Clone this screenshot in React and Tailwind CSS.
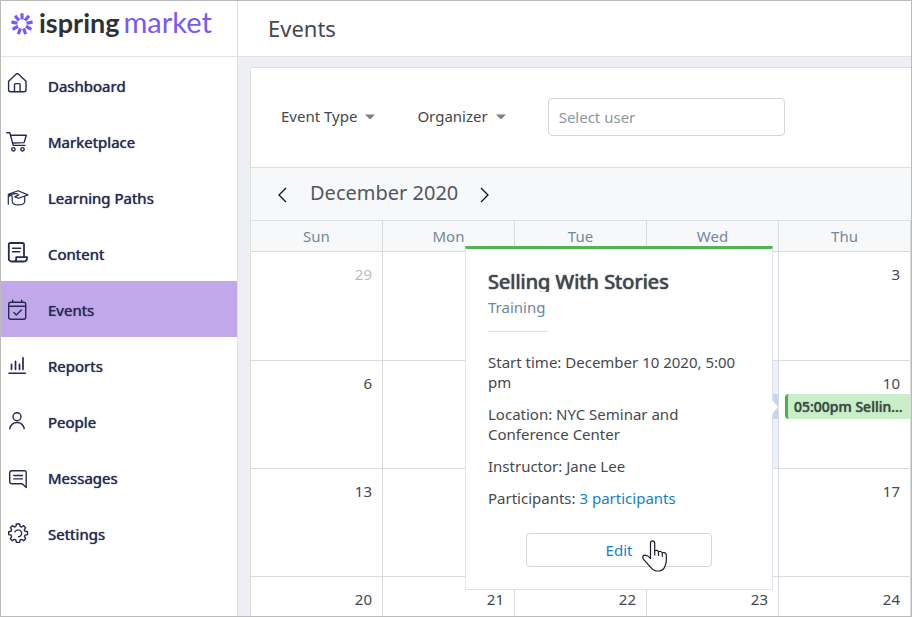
// --- Imports ---
import React from "react";
import { clsx } from "clsx";

// --- Icons ---
// Shared wrapper for the sidebar icons.
function NavIcon({ children }) {
  return (
    <svg
      className="h-6 w-6 shrink-0"
      viewBox="0 0 24 24"
      fill="none"
      stroke="currentColor"
      strokeWidth="1.4"
      strokeLinecap="round"
      strokeLinejoin="round"
      aria-hidden="true"
    >
      {children}
    </svg>
  );
}

const icons = {
  dashboard: (
    <>
      <path d="M3.6 8.2 11.3 1.1a1.5 1.5 0 0 1 2 0L21 8.2v8.6a2 2 0 0 1-2 2H5.6a2 2 0 0 1-2-2z" />
      <path d="M9.5 18.6v-7a1 1 0 0 1 1-1h3.6a1 1 0 0 1 1 1v7" />
    </>
  ),
  marketplace: (
    <>
      <path d="M1.8 3.8h3l3.4 12.6H20" />
      <path d="M5.6 6.2h15.7l-2.2 7.4-11.4.4" />
      <circle cx="8.4" cy="20.3" r="1.7" />
      <circle cx="17.5" cy="20.3" r="1.7" />
    </>
  ),
  learning: (
    <>
      <path
        d="M3.3 9.4 13 5.7l10 4.2-9.6 3.4-3.6-1.4 4-2M3.3 9.4v9.8M3.3 9.4l3.9 1.8M7.2 11.2v5.3c.3 4.5 12 4.5 12.5 0v-5"
        strokeWidth="1.2"
      />
      <path d="M4 11.5c2-3 5.5-3.2 8.5-2.7" strokeWidth="1.2" />
    </>
  ),
  content: (
    <>
      <path
        d="M19 16.2V3.3A1.3 1.3 0 0 0 17.7 2H5.2a1.4 1.4 0 0 0-1.4 1.4v14.3a2.8 2.8 0 0 0 2.8 2.8h12.2c2 0 3.3-1.7 3.3-4.3H11.2V18a2.5 2.5 0 0 1-2.5 2.5"
        strokeWidth="1.8"
      />
      <path d="M7.6 7.3h8M7.6 10.8h7" strokeWidth="1.6" />
    </>
  ),
  events: (
    <>
      <rect x="3.7" y="5.2" width="17" height="17" rx="2" />
      <path d="M3.7 9.3h17M7.7 3.3v1.9M16.7 3.3v1.9M8.8 15.6l2.5 2.5 5-5.2" />
    </>
  ),
  reports: (
    <>
      <path d="M4 20.2h16.3" strokeWidth="1.6" />
      <path d="M6.5 16.3v-5M10.5 16.3v-8M14.5 16.3v-5M18 16.3V4.8" strokeWidth="1.7" />
    </>
  ),
  people: (
    <>
      <circle cx="12" cy="7.7" r="4" />
      <path d="M4.8 19.7c1-4.4 3.8-6.2 7.2-6.2s6.2 1.8 7.2 6.2" />
    </>
  ),
  messages: (
    <>
      <path d="m21.2 22.5-4-3.7H7a2.3 2.3 0 0 1-2.3-2.3V8A2.3 2.3 0 0 1 7 5.7h12.5a1.7 1.7 0 0 1 1.7 1.7z" />
      <path d="M8.8 10.5h8.6M8.8 13.9h8.6" />
    </>
  ),
  settings: (
    <>
      <path d="M11.4 3h3.2l.5 2.4 1.5.6 2-1.3 2 2-1.2 2 .6 1.6 2.5.5v2.8l-2.5.5-.6 1.6 1.3 2-2 2-2.1-1.3-1.5.6-.5 2.4h-3.2l-.5-2.4-1.5-.6-2.1 1.3-2-2 1.3-2-.6-1.6-2.3-.5v-2.8l2.3-.5.6-1.6-1.3-2 2-2 2.1 1.3 1.5-.6z" />
      <path d="M10 10.800a3.500 3.500 0 1 1 3.600 5" />
    </>
  ),
};

function LogoMark() {
  return (
    <svg className="h-6 w-6 shrink-0" viewBox="0 0 24 24" aria-hidden="true">
      {[0, 40, 80, 120, 160, 200, 240, 280, 320].map((angle) => (
        <rect
          key={angle}
          x="10.4"
          y="1.2"
          width="3.2"
          height="6.2"
          rx="0.4"
          fill="#7559fb"
          transform={`rotate(${angle} 12 12)`}
        />
      ))}
    </svg>
  );
}

function Caret() {
  return (
    <svg className="h-1.5 w-2.5" viewBox="0 0 10 6" aria-hidden="true">
      <path d="M0 .5h10L5 5.5z" fill="#7a8084" />
    </svg>
  );
}

function Chevron({ d }) {
  return (
    <svg
      className="h-4 w-2.5"
      viewBox="0 0 10 16"
      fill="none"
      stroke="#111"
      strokeWidth="1.3"
      aria-hidden="true"
    >
      <path d={d} />
    </svg>
  );
}

function HandCursor() {
  return (
    <svg
      className="pointer-events-none absolute top-[7px] left-29 h-8 w-7"
      viewBox="0 0 28 32"
      aria-hidden="true"
    >
      <path
        d="M8.5 18.5V3a2 2 0 0 1 4.2 0v7.8c1.6-1 3.4-.4 3.8.9 1.5-.8 3.2-.2 3.8 1.1 2-.8 4 .2 4 2.4v5.3c0 2.8-1 4.4-1.6 6.2-.8 2.4-2.8 3.8-5.2 4.3h-3.6c-2.800-.8-4.200-2.300-5.700-4.200l-6.600-7.500c-1.500-2-.9-4 1.200-4.200 2-.1 4.200 1.500 5.700 3.400z"
        fill="#fff"
        stroke="#1a1a2b"
        strokeWidth="1.2"
        strokeLinejoin="round"
      />
      <path d="M12.7 10.5v5M16.5 11.5V16M20.3 12.8v4" fill="none" stroke="#1a1a2b" strokeWidth="1.2" />
    </svg>
  );
}

// --- Data ---
const navItems = [
  { label: "Dashboard", icon: "dashboard" },
  { label: "Marketplace", icon: "marketplace" },
  { label: "Learning Paths", icon: "learning" },
  { label: "Content", icon: "content" },
  { label: "Events", icon: "events", active: true },
  { label: "Reports", icon: "reports" },
  { label: "People", icon: "people" },
  { label: "Messages", icon: "messages" },
  { label: "Settings", icon: "settings" },
];

const weekdays = ["Sun", "Mon", "Tue", "Wed", "Thu"];

const weeks = [
  [29, 30, 1, 2, 3],
  [6, 7, 8, 9, 10],
  [13, 14, 15, 16, 17],
  [20, 21, 22, 23, 24],
];

// --- Components ---
function Sidebar() {
  return (
    <aside className="w-[237px] shrink-0 border-r border-[#dfe0e4] bg-white">
      <a href="#home" className="flex h-14 items-start border-b border-[#e2e2e4] pt-[11px] pl-[9px]">
        <LogoMark />
        <span className="ml-[5px] flex items-baseline gap-1 font-['Lato',sans-serif] leading-5">
          <span className="text-[27px] leading-5 font-bold text-[#2d3238]">ispring</span>
          <span className="text-[29px] leading-5 text-[#7559fb]">market</span>
        </span>
      </a>
      <nav>
        {navItems.map((item) => (
          <a
            key={item.label}
            href={`#${item.icon}`}
            className={clsx(
              "flex h-14 items-center gap-[19px] pl-1 text-[15px] text-[#262a50]",
              item.active && "bg-[#c0a8ea]"
            )}
          >
            <NavIcon>{icons[item.icon]}</NavIcon>
            <span className="pt-0.5 [text-shadow:0_0_1px_currentColor]">{item.label}</span>
          </a>
        ))}
      </nav>
    </aside>
  );
}

function FilterBar() {
  return (
    <div className="flex h-[100px] items-center border-b border-[#dcdee2] bg-white pb-0.5 pl-[30px] text-[15px] text-[#44484f]">
      <button className="flex items-center gap-2">
        Event Type <Caret />
      </button>
      <button className="ml-[42px] flex items-center gap-2">
        Organizer <Caret />
      </button>
      <input
        type="text"
        aria-label="Select user"
        placeholder="Select user"
        className="ml-[42px] h-[38px] w-[237px] rounded border border-[#d4d5d7] px-2.5 placeholder:text-[#8b979e]"
      />
    </div>
  );
}

// Details of the selected event, opens to the left of its day cell.
function EventPopup() {
  return (
    <div className="absolute -top-[115px] right-full z-10 mr-[6px] w-[308px] border border-t-3 border-[#dbe4ec] border-t-[#51b551] bg-white px-[22px] pt-[21px] pb-[22px] text-[15px] leading-5 text-[#44484f]">
      <h2 className="h-[22px] overflow-hidden text-[20px] leading-[24px] font-normal [text-shadow:0_0_1px_currentColor,0_0_1px_currentColor]">
        Selling With Stories
      </h2>
      <p className="mt-[5px] text-[#6f849b]">Training</p>
      <hr className="mt-[14px] w-[60px] border-[#dddfe1]" />
      <div className="mt-5 space-y-3">
        <p>Start time: December 10 2020, 5:00 pm</p>
        <p>Location: NYC Seminar and Conference Center</p>
        <p>Instructor: Jane Lee</p>
        <p>
          Participants:{" "}
          <a href="#participants" className="text-[#1580c8]">
            3 participants
          </a>
        </p>
      </div>
      <div className="relative mx-auto mt-[25px] w-[186px]">
        <button className="h-[34px] w-full rounded border border-[#d4d5d7] text-[#1580c8]">
          Edit
        </button>
        <HandCursor />
      </div>
      {/* Pointer towards the event */}
      <svg
        className="absolute top-[150px] left-full h-4 w-1.5"
        viewBox="0 0 6 16"
        aria-hidden="true"
      >
        <path d="M0 1 6 8 0 15z" fill="#fff" />
      </svg>
    </div>
  );
}

function DayCell({ day }) {
  return (
    <div
      className={clsx(
        "relative border-r border-b border-[#d9dadc] pt-3 text-[15px] leading-[21px]",
        day === 9 ? "bg-[#e9f1fd]" : "bg-white",
        day === 29 ? "text-[#b9bcbf]" : "text-[#44484f]"
      )}
    >
      <div className="pr-2.5 text-right">{day}</div>
      {day === 9 && <div className="h-[25px] bg-[#c1d7f3]" />}
      {day === 10 && (
        <>
          <button className="ml-1.5 block h-[25px] w-[calc(100%-6px)] truncate rounded-l-sm border-l-3 border-[#4caf50] bg-[#c9efc9] pr-1.5 pl-1.5 text-left text-[14px] font-medium text-[#3f4a45] [text-shadow:0_0_1px_currentColor]">
            05:00pm Selling With Stories
          </button>
          <EventPopup />
        </>
      )}
    </div>
  );
}

function Calendar() {
  return (
    <section className="flex grow flex-col">
      <div className="flex h-[53px] items-center border-b border-[#dcdee2] bg-[#f7f8fa] pl-[26px]">
        <button aria-label="Previous month" className="pt-0.5">
          <Chevron d="M9 1 2 8l7 7" />
        </button>
        <h2 className="mr-[22px] ml-[23px] pb-0.5 text-[20px] text-[#54575c]">December 2020</h2>
        <button aria-label="Next month" className="pt-0.5">
          <Chevron d="M1 1l7 7-7 7" />
        </button>
      </div>
      <div className="grid h-[31px] grid-cols-5">
        {weekdays.map((name) => (
          <div
            key={name}
            className="border-r border-b border-[#d9dadc] bg-[#f7f8fa] text-center text-[15px] leading-[30px] text-[#73879c]"
          >
            {name}
          </div>
        ))}
      </div>
      <div className="grid auto-rows-[108px] grid-cols-5 grid-rows-[109px]">
        {weeks.flat().map((day) => (
          <DayCell key={day} day={day} />
        ))}
      </div>
    </section>
  );
}

export default function App() {
  return (
    <div className="flex h-screen overflow-hidden border border-[#bababa] bg-[#eeeff4] font-['Noto_Sans',sans-serif]">
      <Sidebar />
      <main className="flex min-w-0 grow flex-col">
        <header className="flex h-14 shrink-0 items-center border-b border-[#e2e2e4] bg-white pl-[30px]">
          <h1 className="text-[22px] text-[#44484f]">Events</h1>
        </header>
        <div className="mt-2.5 ml-3 flex grow flex-col rounded-tl border-t border-l border-[#dcdee2] bg-white">
          <FilterBar />
          <Calendar />
        </div>
      </main>
    </div>
  );
}
